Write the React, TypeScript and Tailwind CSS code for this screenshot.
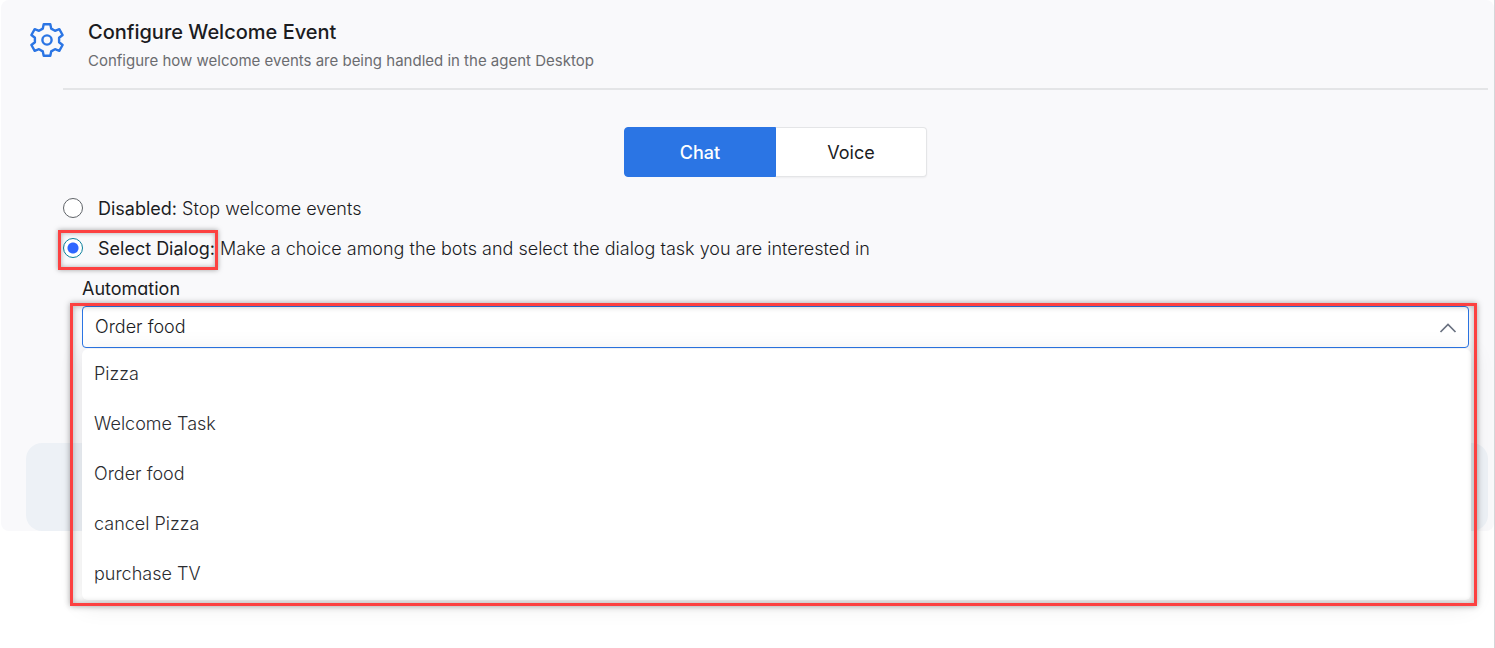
import { useState } from "react";

const tasks = ["Pizza", "Welcome Task", "Order food", "cancel Pizza", "purchase TV"];

function GearIcon() {
  return (
    <svg
      viewBox="0 0 34 34"
      className="size-[34px] shrink-0"
      fill="none"
      stroke="#2b75e4"
      strokeWidth="2.4"
      strokeLinejoin="round"
      aria-hidden="true"
    >
      <path d="M12.8 5.6 13.7 1.2h6.6l.9 4.4 3.8 2.2 4.3-1.6L32.6 12 29.1 14.8v4.4l3.5 2.8-3.3 5.8-4.3-1.6-3.8 2.2-.9 4.4h-6.6l-.9-4.4L9 26.2l-4.3 1.6L1.4 22l3.5-2.8v-4.4L1.4 12l3.3-5.8L9 7.8z" />
      <circle cx="17" cy="17" r="4.6" />
    </svg>
  );
}

function Highlight({ className }: { className: string }) {
  return (
    <span
      aria-hidden="true"
      className={`pointer-events-none absolute z-20 border-3 border-[#fc4141] ${className}`}
    />
  );
}

const radioClass =
  "size-5 shrink-0 appearance-none rounded-full border border-[#5f6368] bg-white checked:border-[#0b7f9b] checked:bg-[radial-gradient(circle,#2f66ff_5px,#ffffff_6px)]";

const tabClass = "border pt-0.5 first:w-[152px] first:rounded-l last:flex-1 last:rounded-r last:border-l-0";

export default function App() {
  const [channel, setChannel] = useState("Chat");
  const [mode, setMode] = useState("dialog");
  const [task, setTask] = useState("Order food");

  return (
    <div className="min-h-screen border-r border-[#d5d6d9] bg-white pl-px font-['Inter',sans-serif] text-[#1b1c1f]">
      <main className="rounded-lg bg-[#f9f9fb] pr-1.5">
        <header className="flex pt-5 pl-[29px]">
          <div className="pt-[3px]">
            <GearIcon />
          </div>
          <div className="pl-6">
            <h1 className="text-xl leading-6 font-medium">Configure Welcome Event</h1>
            <p className="mt-[7px] text-[15px] leading-5 text-[#6b6c70]">
              Configure how welcome events are being handled in the agent Desktop
            </p>
          </div>
        </header>

        <section className="ml-[62px] mt-[17px] border-t-2 border-[#e4e5e7] pt-[37px]">
          <div className="mx-auto flex h-[50px] w-[303px] text-lg" role="group" aria-label="Channel">
            {["Chat", "Voice"].map((name) => (
              <button
                key={name}
                type="button"
                onClick={() => setChannel(name)}
                aria-pressed={channel === name}
                className={`${tabClass} ${
                  channel === name
                    ? "border-[#2b75e4] bg-[#2b75e4] font-medium text-white"
                    : "border-[#e4e5e7] bg-white shadow-xs"
                }`}
              >
                {name}
              </button>
            ))}
          </div>

          <div className="mt-[11px] text-lg leading-6 font-light">
            <label className="flex h-10 items-center">
              <input
                type="radio"
                name="mode"
                checked={mode === "disabled"}
                onChange={() => setMode("disabled")}
                className={radioClass}
              />
              <span className="pt-0.5 pl-[15px]">
                <span className="font-normal">Disabled:</span> Stop welcome events
              </span>
            </label>
            <label className="relative flex h-10 items-center">
              <Highlight className="-left-[5px] top-[2px] h-10 w-40 shadow-[0_0_5px_rgba(0,0,0,0.35),inset_0_0_5px_rgba(0,0,0,0.3)]" />
              <input
                type="radio"
                name="mode"
                checked={mode === "dialog"}
                onChange={() => setMode("dialog")}
                className={radioClass}
              />
              <span className="pt-0.5 pl-[15px]">
                <span className="font-normal">Select Dialog:</span> Make a choice among the bots and
                select the dialog task you are interested in
              </span>
            </label>
          </div>

          <div className="mx-[19px]">
            <label
              htmlFor="automation"
              className="block pt-2 pb-1 text-lg leading-[26px] [font-feature-settings:'cv11']"
            >
              Automation
            </label>
            <div className="relative">
              <select
                id="automation"
                value={task}
                onChange={(e) => setTask(e.target.value)}
                className="block h-[42px] w-full appearance-none rounded border border-[#2b75e4] bg-white pl-3 text-lg font-light outline-none"
              >
                {tasks.map((t) => (
                  <option key={t}>{t}</option>
                ))}
              </select>
              <svg
                viewBox="0 0 18 10"
                className="pointer-events-none absolute right-3 top-[17px] h-[10px] w-[18px]"
                fill="none"
                stroke="#697180"
                strokeWidth="1.7"
                aria-hidden="true"
              >
                <path d="M1.5 9 9 1.5 16.5 9" />
              </svg>
              <ul className="absolute -right-0.5 left-0 top-[43px] z-10 rounded-md bg-white pb-px text-lg font-light text-[#2b2c30] shadow-[0_4px_24px_rgba(0,0,0,0.1)]">
                {tasks.map((t) => (
                  <li key={t}>
                    <button
                      type="button"
                      onClick={() => setTask(t)}
                      className="block h-[50px] w-full px-3 text-left"
                    >
                      {t}
                    </button>
                  </li>
                ))}
              </ul>
              <Highlight className="-left-3 -right-2 -top-[3px] h-[303px] shadow-[0_0_6px_rgba(0,0,0,0.35),inset_0_0_6px_rgba(0,0,0,0.3)]" />
            </div>
          </div>
        </section>

        <div className="ml-[25px] mt-[95px] h-[88px] rounded-2xl bg-[#edf1f6]" />
      </main>
    </div>
  );
}
